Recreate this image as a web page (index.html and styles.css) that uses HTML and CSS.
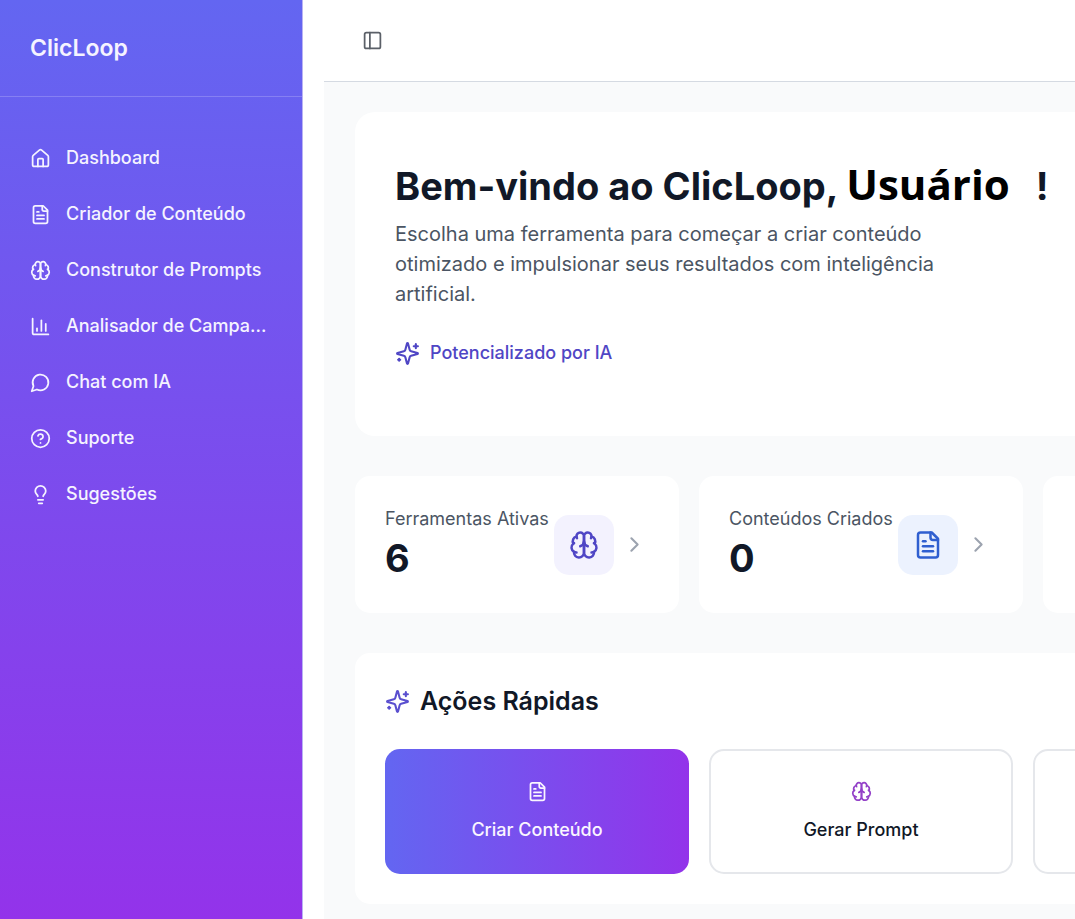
FILE: index.html
```html
<!DOCTYPE html>
<html lang="pt-BR">
<head>
<meta charset="utf-8">
<meta name="viewport" content="width=device-width, initial-scale=1">
<title>ClicLoop</title>
<link rel="stylesheet" href="styles.css">
</head>
<body>
<svg class="sprite" aria-hidden="true">
  <symbol id="home" viewBox="0 0 24 24"><path d="M15 21v-8a1 1 0 0 0-1-1h-4a1 1 0 0 0-1 1v8"/><path d="M3 10a2 2 0 0 1 .709-1.528l7-5.999a2 2 0 0 1 2.582 0l7 5.999A2 2 0 0 1 21 10v9a2 2 0 0 1-2 2H5a2 2 0 0 1-2-2z"/></symbol>
  <symbol id="file" viewBox="0 0 24 24"><path d="M15 2H6a2 2 0 0 0-2 2v16a2 2 0 0 0 2 2h12a2 2 0 0 0 2-2V7Z"/><path d="M14 2v4a2 2 0 0 0 2 2h4"/><path d="M10 9H8"/><path d="M16 13H8"/><path d="M16 17H8"/></symbol>
  <symbol id="brain" viewBox="0 0 24 24"><path d="M12 5a3 3 0 1 0-5.997.125 4 4 0 0 0-2.526 5.77 4 4 0 0 0 .556 6.588A4 4 0 1 0 12 18Z"/><path d="M12 5a3 3 0 1 1 5.997.125 4 4 0 0 1 2.526 5.77 4 4 0 0 1-.556 6.588A4 4 0 1 1 12 18Z"/><path d="M15 13a4.5 4.5 0 0 1-3-4 4.5 4.5 0 0 1-3 4"/><path d="M17.599 6.5a3 3 0 0 0 .399-1.375"/><path d="M6.003 5.125A3 3 0 0 0 6.401 6.5"/><path d="M3.477 10.896a4 4 0 0 1 .585-.396"/><path d="M19.938 10.5a4 4 0 0 1 .585.396"/><path d="M6 18a4 4 0 0 1-1.967-.516"/><path d="M19.967 17.484A4 4 0 0 1 18 18"/></symbol>
  <symbol id="chart" viewBox="0 0 24 24"><path d="M3 3v16a2 2 0 0 0 2 2h16"/><path d="M18 17V9"/><path d="M13 17V5"/><path d="M8 17v-3"/></symbol>
  <symbol id="chat" viewBox="0 0 24 24"><path d="M7.9 20A9 9 0 1 0 4 16.1L2 22Z"/></symbol>
  <symbol id="help" viewBox="0 0 24 24"><circle cx="12" cy="12" r="10"/><path d="M9.09 9a3 3 0 0 1 5.83 1c0 2-3 3-3 3"/><path d="M12 17h.01"/></symbol>
  <symbol id="bulb" viewBox="0 0 24 24"><path d="M15 14c.2-1 .7-1.7 1.5-2.5 1-.9 1.5-2.2 1.5-3.5A6 6 0 0 0 6 8c0 1 .2 2.2 1.5 3.5.7.7 1.3 1.5 1.5 2.5"/><path d="M9 18h6"/><path d="M10 22h4"/></symbol>
  <symbol id="panel" viewBox="0 0 24 24"><rect x="3" y="3" width="18" height="18" rx="2"/><path d="M9 3v18"/></symbol>
  <symbol id="sparkles" viewBox="0 0 24 24"><path d="M9.937 15.5A2 2 0 0 0 8.5 14.063l-6.135-1.582a.5.5 0 0 1 0-.962L8.5 9.936A2 2 0 0 0 9.937 8.5l1.582-6.135a.5.5 0 0 1 .963 0L14.063 8.5A2 2 0 0 0 15.5 9.937l6.135 1.581a.5.5 0 0 1 0 .964L15.5 14.063a2 2 0 0 0-1.437 1.437l-1.582 6.135a.5.5 0 0 1-.963 0z"/><path d="M20 3v4"/><path d="M22 5h-4"/><path d="M4 17v2"/><path d="M5 18H3"/></symbol>
  <symbol id="chevron" viewBox="0 0 24 24"><path d="m9 18 6-6-6-6"/></symbol>
</svg>
<div class="app">
  <aside class="sidebar">
    <div class="brand">ClicLoop</div>
    <nav class="nav" aria-label="Principal">
      <a class="nav-link" href="#dashboard"><svg class="icon"><use href="#home"/></svg><span class="nav-text">Dashboard</span></a>
      <a class="nav-link" href="#criador"><svg class="icon"><use href="#file"/></svg><span class="nav-text">Criador de Conteúdo</span></a>
      <a class="nav-link" href="#prompts"><svg class="icon"><use href="#brain"/></svg><span class="nav-text">Construtor de Prompts</span></a>
      <a class="nav-link" href="#campanhas"><svg class="icon"><use href="#chart"/></svg><span class="nav-text">Analisador de Campa...</span></a>
      <a class="nav-link" href="#chat-ia"><svg class="icon"><use href="#chat"/></svg><span class="nav-text">Chat com IA</span></a>
      <a class="nav-link" href="#suporte"><svg class="icon"><use href="#help"/></svg><span class="nav-text">Suporte</span></a>
      <a class="nav-link" href="#sugestoes"><svg class="icon"><use href="#bulb"/></svg><span class="nav-text">Sugestões</span></a>
    </nav>
  </aside>
  <div class="page">
    <header class="topbar">
      <button class="toggle" type="button" aria-label="Alternar menu"><svg class="icon"><use href="#panel"/></svg></button>
    </header>
    <main class="content">
      <section class="welcome">
        <h1 class="title">Bem-vindo ao ClicLoop, <span class="user">Usuário</span><span class="mark">!</span></h1>
        <p class="lead">Escolha uma ferramenta para começar a criar conteúdo otimizado e impulsionar seus resultados com inteligência artificial.</p>
        <div class="powered"><svg class="icon icon-md"><use href="#sparkles"/></svg><span>Potencializado por IA</span></div>
      </section>
      <section class="stats" aria-label="Resumo">
        <article class="stat">
          <div class="stat-info"><span class="stat-label">Ferramentas Ativas</span><strong class="stat-value">6</strong></div>
          <span class="tile tile-indigo"><svg class="icon icon-lg"><use href="#brain"/></svg></span>
          <svg class="icon icon-md chevron"><use href="#chevron"/></svg>
        </article>
        <article class="stat">
          <div class="stat-info"><span class="stat-label">Conteúdos Criados</span><strong class="stat-value">0</strong></div>
          <span class="tile tile-blue"><svg class="icon icon-lg"><use href="#file"/></svg></span>
          <svg class="icon icon-md chevron"><use href="#chevron"/></svg>
        </article>
        <article class="stat"></article>
      </section>
      <section class="quick">
        <h2 class="quick-title"><svg class="icon icon-md"><use href="#sparkles"/></svg>Ações Rápidas</h2>
        <div class="actions">
          <button class="action action-primary" type="button"><svg class="icon"><use href="#file"/></svg>Criar Conteúdo</button>
          <button class="action" type="button"><svg class="icon"><use href="#brain"/></svg>Gerar Prompt</button>
          <button class="action" type="button" aria-label="Mais ações"></button>
        </div>
      </section>
    </main>
  </div>
</div>
</body>
</html>
```
FILE: styles.css
```css
* { box-sizing: border-box; }

body {
  margin: 0;
  background: #fff;
  color: #111827;
  font-family: Inter, "Liberation Sans", sans-serif;
  font-size: 18px;
  line-height: 26px;
}

.sprite { position: absolute; width: 0; height: 0; }

.icon {
  flex: none;
  width: 21px;
  height: 21px;
  fill: none;
  stroke: currentColor;
  stroke-width: 2;
  stroke-linecap: round;
  stroke-linejoin: round;
}
.icon-md { width: 25px; height: 25px; }
.icon-lg { width: 30px; height: 30px; }

.app {
  display: flex;
  gap: 21px;
  min-height: 100vh;
  overflow: hidden;
}

.sidebar {
  flex: none;
  width: 303px;
  border-right: 1px solid #b9b3f3;
  background: linear-gradient(to bottom, #6366f1, #9333ea);
  color: #f5f3ff;
}
.brand {
  padding: 30px;
  border-bottom: 1px solid rgba(255, 255, 255, 0.2);
  font-size: 23px;
  font-weight: 600;
  line-height: 36px;
}
.nav {
  display: flex;
  flex-direction: column;
  gap: 10px;
  padding: 38px 20px;
}
.nav-link {
  display: flex;
  align-items: center;
  gap: 15px;
  height: 46px;
  padding: 0 10px;
  color: inherit;
  font-weight: 500;
  text-decoration: none;
}
.nav-text { white-space: nowrap; }

.page {
  flex: 1;
  min-width: 0;
  background: #f9fafb;
}
.topbar {
  display: flex;
  align-items: center;
  height: 82px;
  padding: 0 30px;
  border-bottom: 1px solid #d5dae2;
  background: #fff;
}
.toggle {
  display: grid;
  place-items: center;
  width: 36px;
  height: 36px;
  padding: 0;
  border: 0;
  background: none;
  color: #5b6068;
}

.content {
  display: flex;
  flex-direction: column;
  gap: 40px;
  padding: 30px 0 14px 31px;
}

.welcome {
  padding: 49px 40px 68px;
  border-radius: 20px 0 0 20px;
  background: #fff;
}
.title {
  margin: 0 0 10px;
  font-size: 38px;
  font-weight: 700;
  line-height: 46px;
  white-space: nowrap;
}
.user {
  color: #000;
  font-family: "Open Sans", "Noto Sans", sans-serif;
  font-size: 42px;
}
.mark { margin-left: 26px; }
.lead {
  max-width: 580px;
  margin: 0 0 29px;
  color: #4b5563;
  font-size: 20px;
  line-height: 30px;
}
.powered {
  display: flex;
  align-items: center;
  gap: 10px;
  height: 30px;
  color: #4f46c5;
  font-weight: 500;
}

.stats {
  display: grid;
  grid-auto-flow: column;
  grid-auto-columns: 324px;
  gap: 20px;
}
.stat {
  display: flex;
  align-items: center;
  height: 137px;
  padding: 30px;
  border-radius: 15px;
  background: #fff;
}
.stat-info {
  display: flex;
  flex-direction: column;
  flex: none;
  width: 169px;
}
.stat-label {
  color: #4b5563;
  white-space: nowrap;
}
.stat-value {
  font-size: 38px;
  line-height: 52px;
}
.tile {
  display: grid;
  place-items: center;
  flex: none;
  width: 60px;
  height: 60px;
  margin-right: 8px;
  border-radius: 15px;
}
.tile-indigo { background: #f3f2fe; color: #4f46c5; }
.tile-blue { background: #ecf2fe; color: #2f5fd0; }
.chevron { color: #9ca3af; }

.quick {
  padding: 30px;
  border-radius: 15px 0 0 15px;
  background: #fff;
}
.quick-title {
  display: flex;
  align-items: center;
  gap: 10px;
  margin: 0 0 30px;
  font-size: 25px;
  font-weight: 600;
  line-height: 36px;
}
.quick-title .icon { color: #5a4fcf; }
.actions {
  display: grid;
  grid-auto-flow: column;
  grid-auto-columns: 304px;
  gap: 20px;
}
.action {
  display: flex;
  flex-direction: column;
  align-items: center;
  justify-content: center;
  gap: 15px;
  height: 125px;
  border: 2px solid #e5e7eb;
  border-radius: 15px;
  background: #fff;
  color: #111827;
  font: inherit;
  font-weight: 500;
}
.action .icon { color: #9340c8; }
.action-primary {
  border: 0;
  background: linear-gradient(to right, #6366f1, #9333ea);
  color: #faf5ff;
}
.action-primary .icon { color: inherit; }
```
